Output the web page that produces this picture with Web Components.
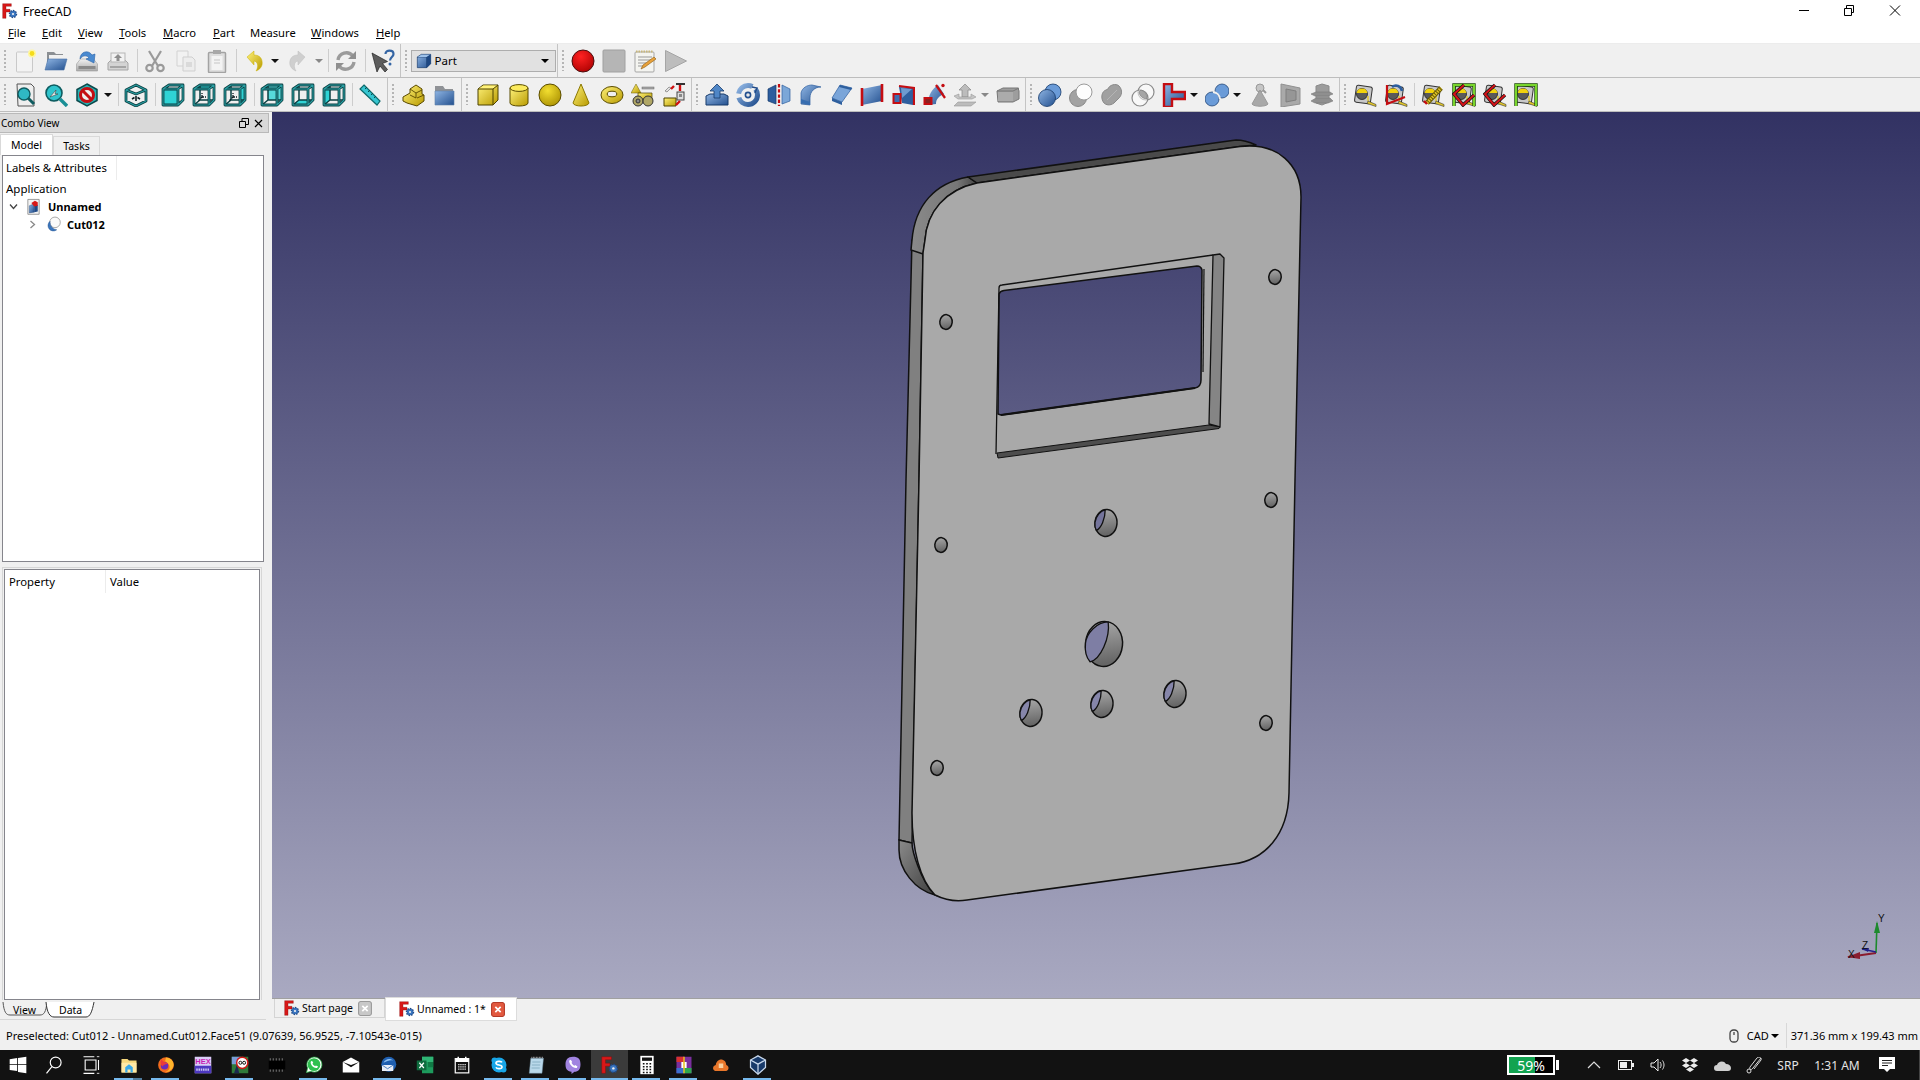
<!DOCTYPE html>
<html>
<head>
<meta charset="utf-8">
<title>FreeCAD</title>
<style>
  html, body { margin: 0; height: 100%; overflow: hidden; }
  body { width: 1920px; height: 1080px; display: flex; flex-direction: column; font: 11px "Noto Sans", sans-serif; color: #000; background: #f0f0f0; }
  fc-main { flex: 1; min-height: 0; }
</style>
</head>
<body>
  <fc-titlebar>FreeCAD</fc-titlebar>
  <fc-menubar></fc-menubar>
  <fc-toolbar row="1"></fc-toolbar>
  <fc-toolbar row="2"></fc-toolbar>
  <fc-main>
    <fc-combo></fc-combo>
    <fc-workspace></fc-workspace>
  </fc-main>
  <fc-statusbar></fc-statusbar>
  <fc-taskbar></fc-taskbar>

<script>
// --- Icons: every icon is a 24x24 svg body ---
const grad = (id, a, b, x2 = 1, y2 = 1) =>
  `<defs><linearGradient id="${id}" x1="0" y1="0" x2="${x2}" y2="${y2}"><stop offset="0" stop-color="${a}"/><stop offset="1" stop-color="${b}"/></linearGradient></defs>`;

const Y = grad('y', '#fff27a', '#b89a00');
const B = grad('b', '#8fb5e3', '#23508f');
const G = grad('g', '#f2f2f2', '#a8a8a8', 0, 1);
const TF = '#2fd3d5';

// view cubes have a dark outline with a lighter teal core
const tube = d => `<path d="${d}" fill="none" stroke="#0a3f42" stroke-width="2.8" stroke-linejoin="round"/><path d="${d}" fill="none" stroke="#2a9ea2" stroke-width="1.1" stroke-linejoin="round"/>`;
const cubeLines = tube('M2 6l6-4h14v15l-5 5H2zM2 6h15v16M17 6l5-4');
const backLines = `<path d="M8 2v15l-6 5M8 17h14" fill="none" stroke="#0a3f42" stroke-width="1.5"/>`;
const spokes = (x, y) => `<path d="M${x} ${y}l-4 4M${x} ${y}v-4M${x} ${y}h4" stroke="#0c1c20" stroke-width="1.3" stroke-dasharray="2 1"/>`;
const isoCube = `${tube('M12 2l10 5v11l-10 5-10-5V7zM2 7l10 4 10-4')}<path d="M12 13v5M8 16l2.500-1.500M16 16l-2.500-1.500" stroke="#0c1c20" stroke-width="1.6"/>`;
const measureBase = `<rect x="2.500" y="3" width="16" height="17" rx="2" transform="rotate(8 10 11)" fill="#c9c9c9" stroke="#333"/><circle cx="9" cy="11" r="5.500" fill="#5a5a5a" stroke="#222" stroke-width=".8"/><path d="M3.600 10a5.500 5.500 0 0 1 10.800 0z" fill="#f2d20c"/><path d="M15 13v5" stroke="#e3c82a" stroke-width="1.400"/><path d="M15 18l8 3.500v2l-9-3z" fill="#e3c82a" stroke="#333" stroke-width=".6"/>`;
const measureRed = `<path d="M12 2L2 11l9 11 11-10" fill="none" stroke="#111" stroke-width="3.400"/><path d="M12 2L2 11l9 11 11-10" fill="none" stroke="#d4141a" stroke-width="2"/>`;
const greenFrame = `<path d="M2 23V2h20v21" fill="none" stroke="#1d4a06" stroke-width="3.400"/><path d="M2 23V2h20v21" fill="none" stroke="#78d52c" stroke-width="2"/>`;

const ICONS = {
  new: `<rect x="3.500" y="3" width="16" height="20" rx="1" fill="#f3f3f3" stroke="#c9c9c9"/><circle cx="19" cy="4.500" r="4" fill="#fff6a0"/><circle cx="19" cy="4.500" r="2.400" fill="#f5dc1a"/>`,
  open: `${B}<path d="M3 3h7l2 2h7v8H3z" fill="#8b8f93"/><path d="M5 6h14v8H5z" fill="#f0f0f0"/><path d="M1 21l3-11h19l-3 11z" fill="url(#b)" stroke="#4a74a8" stroke-width=".6"/>`,
  save: `${G}<path d="M1.500 15l4-5h13l4 5v7h-21z" fill="url(#g)" stroke="#9a9a9a" stroke-width=".6"/><rect x="3.500" y="17" width="17" height="3" fill="#8a8a8a"/><path d="M5 10C5 3 13 0 17 6l3-1-1 9-8-4 3-1c-2-3-6-3-9 1z" fill="#4a8ad0" stroke="#2a62a6" stroke-width=".6"/>`,
  saveas: `<path d="M2 14l3-3h14l3 3v7H2z" fill="#d4d4d4" stroke="#a5a5a5"/><rect x="5" y="4" width="14" height="9" fill="#f2f2f2" stroke="#b5b5b5"/><path d="M12 5l4 4h-2.500v3h-3V9H8z" fill="#8e8e8e"/><rect x="4" y="17" width="16" height="2" fill="#a5a5a5"/>`,
  cut: `<g fill="none" stroke="#9a9a9a" stroke-width="2.200"><path d="M6 2l9 15M18 2L9 17"/><circle cx="6.500" cy="19" r="3.200"/><circle cx="17.500" cy="19" r="3.200"/></g>`,
  copy: `<path d="M3 2h11v15H3z" fill="#f2f2f2" stroke="#d2d2d2"/><path d="M9 8h9l3 3v11H9z" fill="#ededed" stroke="#cfcfcf"/><rect x="12" y="13" width="6" height="5" fill="#dadada"/>`,
  paste: `<rect x="3.500" y="3.500" width="17" height="20" rx="1" fill="#dedede" stroke="#a3a3a3" stroke-width="1.500"/><rect x="6.500" y="7" width="11" height="14" fill="#f3f3f3"/><rect x="8" y="1" width="8" height="4" fill="#a8a8a8"/><path d="M9 11h6M9 14h6" stroke="#c5c5c5"/>`,
  undo: `${Y}<path d="M5 8l7-6v4c6 0 9 4 8 10-1 3-3 5-6 6 2-3 3-9-2-10v4z" fill="url(#y)" stroke="#c9b000" stroke-width=".5"/>`,
  redo: `<path d="M19 8l-7-6v4C6 6 3 10 4 16c1 3 3 5 6 6-2-3-3-9 2-10v4z" fill="#cfcfcf" stroke="#bdbdbd" stroke-width=".5"/>`,
  refresh: `<g fill="none" stroke="#9b9b9b" stroke-width="3.400"><path d="M4 11C5 4 14 1 19 7"/><path d="M20 13c-1 7-10 10-15 4"/></g><path d="M22 2v8h-8zM2 22v-8h8z" fill="#8f8f8f"/>`,
  help: `<path d="M1 4l5 19 3-6 5 6 2.500-2.500-5-6 5-2z" fill="#5c5c5c" stroke="#222" stroke-width=".7"/><path d="M14.500 5c0-4.500 8-4.500 8 0 0 3-3.500 3-3.500 6.500" fill="none" stroke="#3465a4" stroke-width="2.200"/><circle cx="19" cy="15" r="1.500" fill="#3465a4"/>`,
  record: `<defs><radialGradient id="r" cx=".4" cy=".3" r=".8"><stop offset="0" stop-color="#f22"/><stop offset="1" stop-color="#a00"/></radialGradient></defs><circle cx="12" cy="12" r="11" fill="url(#r)" stroke="#4a1010"/>`,
  stop: `<rect x="1" y="1" width="22" height="22" rx="1" fill="#b5b5b5" stroke="#a0a0a0"/>`,
  macroedit: `<rect x="2" y="3" width="19" height="20" rx="1" fill="#f4f4f0" stroke="#a5a5a5"/><path d="M3 2.500h17" stroke="#c9b77a" stroke-width="2" stroke-dasharray="1.500 1"/><path d="M5 8h14M5 11h14M5 14h8M5 17h5" stroke="#999"/><path d="M8 20l2-4L21 8l2 2-11 8z" fill="#e8a13a" stroke="#8a5a10" stroke-width=".6"/>`,
  play: `<path d="M1.500 1.500l21 10.500-21 10.500z" fill="#bdbdbd" stroke="#a5a5a5"/>`,

  fitall: `<path d="M4 1h14l3 3v19H5z" fill="#eee" stroke="#555"/><circle cx="11" cy="11" r="6" fill="#2fb8c4" stroke="#0e5c60" stroke-width="1.400"/><path d="M15 15l6 6" stroke="#0e5c60" stroke-width="3"/>`,
  fitsel: `<circle cx="10" cy="10" r="8" fill="#2fc4cc" stroke="#0e5c60" stroke-width="1.600"/><path d="M6 14l6-7-1 4 3 0z" fill="#eee" stroke="#333" stroke-width=".5"/><path d="M16 16l7 7" stroke="#1a8f96" stroke-width="3.400"/>`,
  drawstyle: `<path d="M12 1l10 5.500v11L12 23 2 17.500v-11z" fill="#27b3b5" stroke="#0c4a4c" stroke-width="1.500"/><circle cx="12" cy="12" r="6.500" fill="#eee" stroke="#c40d12" stroke-width="3"/><path d="M7.500 7.500l9 9" stroke="#c40d12" stroke-width="3"/>`,
  iso: isoCube,
  front: `<path d="M2 6h15v16H2z" fill="${TF}"/>${cubeLines}`,
  top: `<path d="M2 6l6-4h14l-5 4z" fill="${TF}"/>${backLines}${cubeLines}${spokes(10, 14)}`,
  right: `<path d="M17 6l5-4v15l-5 5z" fill="${TF}"/>${backLines}${cubeLines}${spokes(10, 14)}`,
  rear: `<path d="M8 2h14v15H8z" fill="${TF}" opacity=".8"/>${backLines}${cubeLines}`,
  bottom: `<path d="M2 22l6-5h14l-5 5z" fill="${TF}"/>${backLines}${cubeLines}`,
  left: `<path d="M2 6l6-4v15l-6 5z" fill="${TF}"/>${backLines}${cubeLines}`,
  measure: `<path d="M7 2L23 18l-3 4L3 6z" fill="#36c5d0" stroke="#0e6a6c" stroke-width="1.200"/><path d="M8 6l2-2M11 9l2-2M14 12l2-2M17 15l2-2" stroke="#0e4a4c"/>`,
  part: `${Y}<path d="M2 14l7-4V6l6-4 6 4v5l2 1v6l-7 5-10-3-4-2z" fill="url(#y)" stroke="#5a4a00"/><path d="M9 6l6 4v5l-6-3M15 10l6-3M16 15l7-3" fill="none" stroke="#5a4a00" stroke-width=".9"/>`,
  group: `${B}<path d="M3 3h8l2 3h8v6H3z" fill="#8f9296"/><path d="M3 8h19v14H3z" fill="url(#b)" stroke="#5e7fa8" stroke-width=".6"/>`,
  box: `${Y}<path d="M2 6l5-4h15v15l-5 5H2z" fill="url(#y)" stroke="#4d4200"/><path d="M2.500 6l5-3.500h14L17 6z" fill="#fff27a"/><path d="M2 6h15v16M17 6l5-4" fill="none" stroke="#4d4200"/>`,
  cyl: `${Y}<path d="M3 5v15c0 4 18 4 18 0V5z" fill="url(#y)" stroke="#5a4c00"/><ellipse cx="12" cy="5" rx="9" ry="3.400" fill="#fbeb5e" stroke="#5a4c00"/>`,
  sphere: `<defs><radialGradient id="s" cx=".4" cy=".3" r=".8"><stop offset="0" stop-color="#f2de30"/><stop offset="1" stop-color="#a88e00"/></radialGradient></defs><circle cx="12" cy="12" r="11" fill="url(#s)" stroke="#5a4c00"/>`,
  cone: `${Y}<path d="M12 1L4 20c1 4 15 4 16 0z" fill="url(#y)" stroke="#8a7700"/>`,
  torus: `${Y}<ellipse cx="12" cy="12" rx="11" ry="8.500" fill="url(#y)" stroke="#5a4c00"/><ellipse cx="12" cy="11" rx="4.800" ry="2.800" fill="#efefef" stroke="#5a4c00"/>`,
  prims: `${Y}<path d="M5 1l5 9H0z" fill="url(#y)" stroke="#6b5b00" stroke-width=".5"/><rect x="11" y="4" width="12" height="2" fill="#aaa" stroke="#666" stroke-width=".5"/><path d="M7 10h14v7H7z" fill="url(#y)" stroke="#4d4200" stroke-width=".7"/><g fill="#b0a766" stroke="#333" stroke-width="1"><circle cx="7" cy="18" r="5"/><circle cx="17" cy="18" r="5"/></g><circle cx="7" cy="18" r="2" fill="#888" stroke="#333"/>`,
  builder: `${Y}<rect x="14" y="0" width="9" height="2" fill="#333"/><path d="M18 2v6" stroke="#d01010" stroke-width="2.400"/><rect x="15" y="9" width="7" height="8" fill="#ddd" stroke="#444"/><rect x="17" y="11" width="3" height="3" fill="#888"/><path d="M2 15h12v8H2z" fill="url(#y)" stroke="#4d4200"/><path d="M3 8l4-4 2 1-4 4z" fill="#e2e2e2" stroke="#666" stroke-width=".6"/><path d="M9 6l3-3M14 22l4-4" stroke="#d01010" stroke-width="2.400"/>`,
  extrude: `${B}<path d="M1 13l4-2h14l4 2v9H1z" fill="url(#b)" stroke="#163a6a"/><path d="M12 1l7 7h-4v7H9V8H5z" fill="#4f86c6" stroke="#163a6a" stroke-width=".8"/>`,
  revolve: `${B}<circle cx="12" cy="12" r="9.500" fill="none" stroke="url(#b)" stroke-width="5" stroke-dasharray="27 4 18 4"/><circle cx="12" cy="12" r="2.600" fill="#e8e8e8" stroke="#23508f" stroke-width="1.600"/><path d="M16 4l5 1-2 5" fill="none" stroke="#204a87" stroke-width="1.300"/>`,
  mirror: `${B}<path d="M1 6l8-4v19l-8-3z" fill="#2c5d9e" stroke="#163a6a" stroke-width=".7"/><path d="M15 2l8 4v12l-8 3z" fill="#7ba7d8" stroke="#2c5d9e" stroke-width=".7"/><path d="M12 1v22" stroke="#c40d12" stroke-width="2.200" stroke-dasharray="3.400 1.800"/>`,
  fillet: `${B}<path d="M3 21V10C4 5 9 2 14 2l9 2c-6 0-11 4-11 11v7z" fill="url(#b)" stroke="#2c5d9e" stroke-width=".7"/><path d="M3 16l9 3v3l-9-2z" fill="#376db0"/>`,
  chamfer: `${B}<path d="M3 15L11 2l12 3-10 14z" fill="#7aa5d9" stroke="#2c5d9e" stroke-width=".7"/><path d="M3 15l10 4v3L3 18zM11 2l12 3-1 2-12-3z" fill="#2e5f9e"/>`,
  ruled: `${B}<path d="M2 6l20-4v16L2 22z" fill="url(#b)"/><path d="M2 5v18M22 1v18" stroke="#c40d12" stroke-width="2.600"/>`,
  loft: `<path d="M8 4l14 1v17L11 20z" fill="#2f5f9f"/><path d="M10 5l11 1-10 9z" fill="#6e9bd0"/><path d="M8 3l15 2v17" fill="none" stroke="#c40d12" stroke-width="2.200"/><rect x="2.500" y="11" width="7" height="9" fill="#3d6db0" stroke="#c40d12" stroke-width="2"/>`,
  sweep: `${B}<path d="M6 22c0-10 4-16 10-20l6 9c-5 2-8 5-8 10z" fill="url(#b)"/><path d="M14 2l9 13" stroke="#c40d12" stroke-width="2.200"/><circle cx="21" cy="2.500" r="1.700" fill="#c40d12"/><rect x="2.500" y="15" width="7" height="6" fill="#8c2020" stroke="#c40d12" stroke-width="2"/>`,
  offset: `<path d="M12 1l6 6h-3v7H9V7H6z" fill="#bcbcbc" stroke="#888" stroke-width=".7"/><path d="M1 13l5-2v3h12v-3l5 3-4 2H5z" fill="#c5c5c5" stroke="#999" stroke-width=".6"/><path d="M1 23l4-4h18l-5 4z" fill="#bcbcbc" stroke="#999" stroke-width=".6"/>`,
  thick: `<path d="M1 8l6-3h15l1 3v8l-6 3H2z" fill="#9d9d9d" stroke="#777"/><path d="M1 8h16l6-3" fill="none" stroke="#777"/><path d="M2 9h15v9H2z" fill="#ababab"/>`,
  bool: `${B}<circle cx="15" cy="9" r="8" fill="#6a9bd8" stroke="#163a6a" stroke-width=".8"/><circle cx="9" cy="15" r="8.500" fill="url(#b)" stroke="#163a6a" stroke-width=".8"/>`,
  cutb: `<circle cx="9" cy="15" r="8.500" fill="#a2a2a2" stroke="#888"/><circle cx="15" cy="9" r="8" fill="#fdfdfd" stroke="#9a9a9a"/>`,
  fuse: `<path d="M4 20c-4-5-2-12 2-13l2-1c1-4 8-6 11-3 4 4 3 10-1 13l-4 4c-4 3-8 2-10 0z" fill="#a0a0a0" stroke="#8a8a8a"/><path d="M7 17L17 7" stroke="#b5b5b5"/>`,
  common: `<g fill="#fff" fill-opacity=".5" stroke="#8a8a8a" stroke-width="1.200"><circle cx="15" cy="9" r="8"/><circle cx="9" cy="15" r="8"/></g><path d="M10 7a8 8 0 0 1 6 9 8 8 0 0 1-8-7z" fill="#a5a5a5" stroke="#777" stroke-width=".6"/>`,
  join: `${B}<path d="M2 1h8v8h13v7H10v8H2z" fill="url(#b)" stroke="#c40d12" stroke-width="2.400"/>`,
  split: `${B}<circle cx="17" cy="8" r="7" fill="#6a9bd8" stroke="#163a6a" stroke-width=".7"/><circle cx="7" cy="16" r="7" fill="#6a9bd8" stroke="#163a6a" stroke-width=".7"/><path d="M8 9a8 8 0 0 1 7 7" fill="none" stroke="#f0f0f0" stroke-width="2"/>`,
  compound: `<circle cx="12" cy="5" r="4" fill="#c5c5c5" stroke="#999"/><path d="M12 7L4 21c2 3 14 3 16 0z" fill="#a8a8a8" stroke="#9a9a9a"/><path d="M15 7l3 3" stroke="#999" stroke-width="2"/>`,
  shapeinfo: `<path d="M2 1l19 4v16l-19 3z" fill="#a9a9a9" stroke="#919191"/><path d="M7 6l10 2v9l-10 2z" fill="#969696" stroke="#7f7f7f"/>`,
  compsolid: `<path d="M6 3l6-2 7 2v16l-7 3-6-2z" fill="#9c9c9c" stroke="#8a8a8a"/><path d="M1 11l5-2h14l3 2-5 2H5zM1 18l5-3h14l3 3-5 2H5z" fill="#8f8f8f" stroke="#7a7a7a" stroke-width=".6"/>`,
  mlin: measureBase,
  mang: `${measureBase}<path d="M3 2v19l18-7" fill="none" stroke="#c40d12" stroke-width="2.200"/><path d="M8 4c4-3 9-1 10 4" fill="none" stroke="#2c5d9e" stroke-width="2.600"/>`,
  mrefresh: `${measureBase}<path d="M6 20L20 5" stroke="#6a5a00" stroke-width="5"/><path d="M6 20L20 5" stroke="#e3c82a" stroke-width="3" stroke-dasharray="1.500 1"/><path d="M3 18l3 3" stroke="#c40d12" stroke-width="2.400"/>`,
  mtog1: `${measureBase}${greenFrame}${measureRed}`,
  mtog2: `${measureBase}${measureRed}`,
  mtog3: `${measureBase}${greenFrame}`,

  freecad: `<path d="M1 1h13v4H6v4.500h6v4H6V23H1z" fill="#d81818" stroke="#7a0a0a" stroke-width=".5"/><circle cx="16.500" cy="16.500" r="5" fill="#2d65ad" stroke="#204a87" stroke-width="2.600" stroke-dasharray="2.200 1.600"/><circle cx="16.500" cy="16.500" r="4.200" fill="#3b76c0"/><circle cx="16.500" cy="16.500" r="1.600" fill="#f0f0f0"/>`,
  doc: `${B}<path d="M4 2h16v21H4z" fill="#f4f4f4" stroke="#777"/><path d="M6 11l7-3v12l-7 1z" fill="url(#b)" stroke="#163a6a" stroke-width=".5"/><path d="M13 8l5 2v9l-5 1z" fill="#204a87"/><path d="M9 7l5-3 4 2v5l-5 1z" fill="#d81818"/>`,
  cut012: `<circle cx="15.500" cy="9" r="7.500" fill="#fafafa" stroke="#8a8a8a"/><path d="M8.500 7.500A7.500 7.500 0 1 0 18 19.500 11 11 0 0 1 8.500 7.500z" fill="#3a76bd" stroke="#204a87" stroke-width=".6"/>`,
  partcube: `${B}<path d="M2 6l6-4h14v14l-6 6H2z" fill="url(#b)" stroke="#163a6a"/><path d="M2 6h14v16" fill="none" stroke="#163a6a"/><path d="M2.500 6l6-3.500h13L16 6z" fill="#9ec2ea"/><path d="M16 6l6-4v14l-6 6z" fill="#1d4782"/>`,

  // taskbar
  start: `<path d="M2 5l9-1.300V11H2zM12 3.500L22 2v9H12zM2 12h9v7.300L2 18zM12 12h10v10l-10-1.500z" fill="#fff"/>`,
  search: `<circle cx="14" cy="9" r="6.500" fill="none" stroke="#fff" stroke-width="1.400"/><path d="M9.500 14L3 22" stroke="#fff" stroke-width="1.400"/>`,
  taskview: `<path d="M5 6h13v12H5z" fill="none" stroke="#fff" stroke-width="1.300"/><path d="M3 2h13M3 22h13M21 6v12" stroke="#fff" stroke-width="1.300"/><path d="M19 2h3M19 22h3" stroke="#fff"/>`,
  explorer: `<path d="M2 4h8l2 2h10v16H2z" fill="#f6d77c"/><path d="M2 9h20v13H2z" fill="#ffe9a6"/><path d="M7 15l5-4 5 4v7h-3v-4h-4v4H7z" fill="#39a8e8"/>`,
  firefox: `<circle cx="12" cy="12" r="10.500" fill="#f26b1d"/><path d="M12 2c6 0 11 5 10 11-1 5-6 9-11 8 5-1 7-5 5-9-1-3-5-3-5-6z" fill="#ffb52c"/><circle cx="10" cy="13" r="5" fill="#6a2cb8"/><path d="M6 4c2 5 7 4 9 7-2-1-6 0-8 3-3-3-3-7-1-10z" fill="#ea3a3a"/>`,
  hex: `<rect x="1" y="1" width="22" height="22" fill="#d9cdf6"/><text x="12" y="11" font-size="10" font-weight="700" text-anchor="middle" font-family="Liberation Sans" fill="#c81fb4">HEX</text><rect x="1" y="13" width="22" height="10" fill="#4d38c0"/><path d="M3 18h18" stroke="#c9c4f0" stroke-width="3" stroke-dasharray="2 1"/>`,
  arduino: `<rect x="1" y="1" width="22" height="22" fill="#2f7a3a"/><path d="M1 1h12v10H1z" fill="#7a9cd8"/><path d="M4 23l4-12 3 12z" fill="#1c2a50"/><circle cx="15" cy="9" r="7.500" fill="#fff" stroke="#d01818" stroke-width="2"/><circle cx="12.500" cy="9" r="2" fill="none" stroke="#000" stroke-width="1.200"/><circle cx="17.500" cy="9" r="2" fill="none" stroke="#000" stroke-width="1.200"/>`,
  chip: `<rect x="1" y="6" width="22" height="12" fill="#000"/><path d="M3 3v3M7 3v3M11 3v3M15 3v3M19 3v3M3 18v3M7 18v3M11 18v3M15 18v3M19 18v3" stroke="#888" stroke-width="1.200"/>`,
  whatsapp: `<path d="M2 22l1.600-6A10 10 0 1 1 8 20.400z" fill="#fff" stroke="#2fc04f" stroke-width="1"/><circle cx="12" cy="11.500" r="8.500" fill="#2fc04f"/><path d="M8 7c-2 3 3 10 8 9l1.500-2-3-1.500-1 1c-2-1-3-2-3.500-3.500l1-1L9.500 6.500z" fill="#fff"/>`,
  mail: `<path d="M1 8l11-6 11 6v14H1z" fill="#fff"/><path d="M1 8l11 7 11-7-11 4z" fill="#111"/>`,
  thunderbird: `<circle cx="13" cy="11" r="10" fill="#1f5fb0"/><path d="M4 12h15v8H4z" fill="#e8eef8"/><path d="M4 12l7.500 5L19 12" fill="none" stroke="#1f5fb0"/><path d="M6 9c3-6 9-6 13-3-5-1-8 1-13 3z" fill="#8fc1f0"/>`,
  excel: `<path d="M8 1h15v22H8z" fill="#1d9a5c"/><path d="M8 1h15v7H8z" fill="#2fb574"/><path d="M16 8h7v7h-7z" fill="#107a45"/><rect x="1" y="6" width="13" height="13" fill="#0e6c3e"/><path d="M4.500 9l6 7M10.500 9l-6 7" stroke="#fff" stroke-width="1.600"/>`,
  calendar: `<rect x="3" y="3.500" width="18" height="19" fill="#111" stroke="#fff" stroke-width="1.600"/><path d="M3 3h18v5H3z" fill="#fff"/><path d="M7 1v3M17 1v3" stroke="#fff" stroke-width="2"/><path d="M7 11.500h10M7 14.500h10M7 17.500h10" stroke="#fff" stroke-width="1.600" stroke-dasharray="1.600 1.200"/>`,
  skype: `<circle cx="12" cy="12" r="10" fill="#18a6e8"/><circle cx="6" cy="6" r="4" fill="#18a6e8"/><circle cx="18" cy="18" r="4" fill="#18a6e8"/><path d="M16 8.500c-1-2-8-2-8 1 0 3 8 2 8 5 0 3-7 3-8 .5" fill="none" stroke="#fff" stroke-width="2.200"/>`,
  notepad: `<path d="M5 3h17l-2 20H3z" fill="#b9d8ea" stroke="#6c8ea0" stroke-width=".6"/><path d="M6 2h15" stroke="#aaa" stroke-width="2" stroke-dasharray="1 1"/><path d="M7 8h11M6.500 12h11M6 16h11" stroke="#7aa3b8"/>`,
  viber: `<path d="M12 1c7 0 10 3 10 10s-3 10-8 10l-4 3v-3C4 20 2 17 2 11S5 1 12 1z" fill="#a184e0"/><path d="M7 6c-1 4 5 11 10 10l1-2-3-2-1 1c-2-1-3-2-4-4l1-1-2-3z" fill="#fff"/>`,
  calc: `<rect x="4" y="1" width="16" height="22" fill="#fff"/><rect x="6" y="3" width="12" height="4" fill="#111"/><path d="M7 10.500h10M7 14h10M7 17.500h10M7 21h10" stroke="#111" stroke-width="1.800" stroke-dasharray="2 2"/>`,
  winrar: `<rect x="2" y="1" width="20" height="22" fill="#7a2f9e"/><rect x="2" y="1" width="10" height="7" fill="#d83030"/><rect x="12" y="16" width="10" height="7" fill="#2fa84f"/><rect x="2" y="16" width="10" height="7" fill="#3a6fd0"/><rect x="8.500" y="8" width="7" height="8" fill="#fff"/><rect x="11" y="1" width="2" height="22" fill="#e8c020"/>`,
  cloudm: `<path d="M4 20C0 18 1 13 5 12c1-6 6-8 9-7 4 1 5 5 5 7 4 1 4 7 0 8z" fill="#e8762a"/><rect x="9" y="10" width="6" height="6" fill="#f8d0a0"/>`,
  vbox: `<path d="M12 1l9 5v9l-9 8-9-8V6z" fill="#183a6a" stroke="#c8d8ec" stroke-width="1.500"/><path d="M3 6l9 5 9-5M12 11v12" fill="none" stroke="#c8d8ec" stroke-width="1.500"/>`,
};

class FcIcon extends HTMLElement {
  connectedCallback() {
    const size = this.getAttribute('size') || 24;
    const name = this.getAttribute('name');
    this.attachShadow({ mode: 'open' }).innerHTML = `
      <style>:host { display: block; width: ${size}px; height: ${size}px; flex: none; } svg { display: block; }</style>
      <svg width="${size}" height="${size}" viewBox="0 0 24 24">${ICONS[name] || ''}</svg>`;
  }
}
customElements.define('fc-icon', FcIcon);

// --- Title bar ---
class FcTitlebar extends HTMLElement {
  constructor() {
    super();
    this.attachShadow({ mode: 'open' }).innerHTML = `
      <style>
        :host { display: flex; align-items: center; height: 22px; background: #fff; font-size: 12px; position: relative; }
        fc-icon { margin: 0 5px 0 2px; }
        .t { flex: 1; }
        .win { display: flex; align-self: flex-start; margin-right: 2px; }
        .win svg { display: block; width: 46px; height: 20px; }
      </style>
      <fc-icon name="freecad" size="16"></fc-icon>
      <span class="t"><slot></slot></span>
      <div class="win">
        <svg viewBox="0 0 46 20"><path d="M19 10.500h10" stroke="#000"/></svg>
        <svg viewBox="0 0 46 20"><path d="M18.500 8.500h7v7h-7zM20.500 8V5.500h7v7H26" fill="none" stroke="#000"/></svg>
        <svg viewBox="0 0 46 20"><path d="M18 5.500l10 10M28 5.500l-10 10" stroke="#000" fill="none"/></svg>
      </div>`;
  }
}
customElements.define('fc-titlebar', FcTitlebar);

// --- Menu bar ---
class FcMenubar extends HTMLElement {
  constructor() {
    super();
    const items = [['File', 8], ['Edit', 42], ['View', 78], ['Tools', 119], ['Macro', 163], ['Part', 213], ['Measure', 250], ['Windows', 311], ['Help', 376]];
    const html = items.map(([label, x], i) => {
      const next = items[i + 1] ? items[i + 1][1] : x + 40;
      const inner = label === 'Measure' ? label : `<u>${label[0]}</u>${label.slice(1)}`;
      return `<span style="width:${next - x}px">${inner}</span>`;
    }).join('');
    this.attachShadow({ mode: 'open' }).innerHTML = `
      <style>
        :host { display: flex; align-items: center; height: 21px; padding-left: 8px; background: #fff; border-bottom: 1px solid #ececec; font-size: 11.200px; }
        span { display: block; white-space: nowrap; }
        u { text-underline-offset: 1px; }
      </style>${html}`;
  }
}
customElements.define('fc-menubar', FcMenubar);

// --- Tool bars ---
// g = grip, s = separator, b = toolbar break, a = drop arrow, c = workbench combo; anything else is an icon
const ROWS = {
  1: [['g', 9.5], 'new', 'open', 'save', 'saveas', ['s', 6], 'cut', 'copy', 'paste', ['s', 6], 'undo', ['a', 13], 'redo', ['a', 12, 1], ['s', 5], 'refresh', ['s', 6], 'help', ['b', 2], ['g', 10], ['c', 145], ['b', 2], ['g', 9.5], 'record', 'stop', 'macroedit', 'play'],
  2: [['g', 9.5], 'fitall', 'fitsel', 'drawstyle', ['a', 12], ['s', 6], 'iso', ['s', 6], 'front', 'top', 'right', ['s', 6], 'rear', 'bottom', 'left', ['s', 4], 'measure', ['b', 3.5], ['g', 9.5], 'part', 'group', ['b', 2.5], ['g', 10.5], 'box', 'cyl', 'sphere', 'cone', 'torus', 'prims', 'builder', ['b', 2], ['g', 9.5], 'extrude', 'revolve', 'mirror', 'fillet', 'chamfer', 'ruled', 'loft', 'sweep', 'offset', ['a', 12, 1], 'thick', ['b', 3], ['g', 8], 'bool', 'cutb', 'fuse', 'common', 'join', ['a', 12], 'split', ['a', 12], 'compound', 'shapeinfo', 'compsolid', ['b', 3], ['g', 9], 'mlin', 'mang', ['s', 6], 'mrefresh', 'mtog1', 'mtog2', 'mtog3'],
};

class FcToolbar extends HTMLElement {
  connectedCallback() {
    const items = ROWS[this.getAttribute('row')].map(item => {
      if (typeof item === 'string') return `<div class="btn"><fc-icon name="${item}"></fc-icon></div>`;
      const [kind, w, dim] = item;
      if (kind === 'c') {
        return `<div class="combo" style="width:${w}px"><fc-icon name="partcube" size="16"></fc-icon><span>Part</span><i></i></div>`;
      }
      return `<div class="${kind}${dim ? ' dim' : ''}" style="width:${w}px"></div>`;
    }).join('');
    this.attachShadow({ mode: 'open' }).innerHTML = `
      <style>
        :host { display: flex; align-items: center; height: 33px; background: #f0f0f0; border-bottom: 1px solid #bdbdbd; font-size: 11.500px; }
        .btn { width: 31px; height: 33px; flex: none; display: flex; align-items: center; justify-content: center; }
        .g, .s, .b, .a { height: 33px; flex: none; position: relative; }
        .g::after { content: ""; position: absolute; left: 4px; top: 6px; bottom: 6px; width: 2px;
          background: repeating-linear-gradient(#b5b5b5 0 2px, transparent 2px 4px); }
        .s::after { content: ""; position: absolute; left: 50%; top: 5px; bottom: 5px; width: 1px; background: #cdcdcd; }
        .b::after { content: ""; position: absolute; right: 0; top: 0; bottom: 0; width: 1px; background: #c4c4c4; }
        .a::after { content: ""; position: absolute; left: 1px; top: 15px; border: 4px solid transparent; border-top: 4px solid #111; border-bottom: 0; }
        .dim::after { border-top-color: #888; }
        .combo { flex: none; box-sizing: border-box; height: 22px; display: flex; align-items: center; gap: 3px; padding: 0 6px 0 4px; background: #e1e1e1; border: 1px solid #adadad; }
        .combo span { flex: 1; }
        .combo i { border: 4px solid transparent; border-top: 4px solid #000; border-bottom: 0; }
      </style>${items}`;
  }
}
customElements.define('fc-toolbar', FcToolbar);

// --- Main area ---
class FcMain extends HTMLElement {
  constructor() {
    super();
    this.attachShadow({ mode: 'open' }).innerHTML = `
      <style>:host { display: flex; min-height: 0; }</style><slot></slot>`;
  }
}
customElements.define('fc-main', FcMain);

// --- Combo view dock on the left ---
class FcCombo extends HTMLElement {
  constructor() {
    super();
    this.attachShadow({ mode: 'open' }).innerHTML = `
      <style>
        :host { display: flex; flex-direction: column; width: 272px; flex: none; box-sizing: border-box; padding: 1px 3px 0 0; background: #f0f0f0; font-size: 11.300px; }
        .head { height: 18px; flex: none; display: flex; align-items: center; background: #d9d9d9; border: 1px solid #b9b9b9; border-left: 0; padding-left: 1px; font-size: 10px; }
        .head span { flex: 1; }
        .head svg { display: block; margin-right: 5px; }
        .tabs { display: flex; align-items: flex-end; height: 22px; flex: none; font-size: 10.500px; }
        .tab { box-sizing: border-box; display: flex; align-items: center; justify-content: center; border: 1px solid #d9d9d9; border-bottom: 0; }
        .tab.on { width: 53px; height: 21px; background: #fff; }
        .tab.off { width: 47px; height: 19px; background: #f0f0f0; }
        .pane { height: 407px; flex: none; margin-left: 2px; margin-right: 5px; box-sizing: border-box; border: 1px solid #85858c; background: #fff; display: flex; flex-direction: column; }
        .hdr { height: 24px; display: flex; align-items: center; flex: none; }
        .hdr span { width: 110px; padding-left: 3px; height: 24px; line-height: 24px; border-right: 1px solid #ececec; }
        .row { height: 18px; display: flex; align-items: center; flex: none; white-space: nowrap; }
        .app { padding-left: 3px; font-size: 11.500px; }
        .row b { font-weight: 700; font-size: 11px; }
        .chev { width: 9px; height: 9px; flex: none; }
        .props { flex: 1; min-height: 0; margin: 5px 7px 0 2px; padding: 1px 1px 0; border: 1px solid #d6d6d6; border-bottom: 0; display: flex; }
        .box { flex: 1; box-sizing: border-box; border: 1px solid #85858c; background: #fff; }
        .phead { display: flex; height: 23px; }
        .phead span { height: 23px; line-height: 23px; padding-left: 4px; }
        .phead span:first-child { width: 96px; border-right: 1px solid #ececec; padding-left: 4px; }
        .bottom { height: 19px; flex: none; display: flex; align-items: flex-start; margin-bottom: 1px; border-bottom: 1px solid #d6d6d6; margin-right: 3px; position: relative; font-size: 10.500px; }
        .bottom svg { display: block; margin: 2px 0 0 2px; }
        .bottom span { position: absolute; top: 3px; }
      </style>
      <div class="head">
        <span>Combo View</span>
        <svg width="10" height="10" viewBox="0 0 10 10"><path d="M.5 3.500h6v6h-6zM3 3V.5h6.500v6H7" fill="none" stroke="#000"/></svg>
        <svg width="9" height="9" viewBox="0 0 9 9"><path d="M1 1l7 7M8 1L1 8" stroke="#000" stroke-width="1.200"/></svg>
      </div>
      <div class="tabs">
        <div class="tab on">Model</div>
        <div class="tab off">Tasks</div>
      </div>
      <div class="pane">
        <div class="hdr"><span>Labels &amp; Attributes</span></div>
        <div class="row app" style="margin-top:-1px">Application</div>
        <div class="row">
          <svg class="chev" style="margin-left:6px" viewBox="0 0 9 9"><path d="M1 2.500l3.500 4 3.500-4" fill="none" stroke="#444" stroke-width="1.300"/></svg>
          <fc-icon name="doc" size="17" style="margin:0 6px 0 7px"></fc-icon><b>Unnamed</b>
        </div>
        <div class="row">
          <svg class="chev" style="margin-left:25px" viewBox="0 0 9 9"><path d="M2.500 1l4 3.500-4 3.500" fill="none" stroke="#888" stroke-width="1.300"/></svg>
          <fc-icon name="cut012" size="17" style="margin:0 6px 0 7px"></fc-icon><b>Cut012</b>
        </div>
      </div>
      <div class="props">
        <div class="box">
          <div class="phead"><span>Property</span><span>Value</span></div>
        </div>
      </div>
      <div class="bottom">
        <svg width="94" height="16" viewBox="0 0 94 16">
          <path d="M1 0c1 10 3 13 7 13h30c4 0 6-3 7-13" fill="none" stroke="#555"/>
          <path d="M44 0c1 11 4 15 8 15h32c4 0 6-5 8-15" fill="#fff" stroke="#333"/>
        </svg>
        <span style="left:13px">View</span><span style="left:59px;top:3px">Data</span>
      </div>`;
  }
}
customElements.define('fc-combo', FcCombo);

// --- Right side: 3D view and the document tabs ---
class FcWorkspace extends HTMLElement {
  constructor() {
    super();
    this.attachShadow({ mode: 'open' }).innerHTML = `
      <style>
        :host { display: flex; flex-direction: column; flex: 1; min-width: 0; }
        fc-viewport { flex: 1; min-height: 0; }
        fc-doctabs { flex: none; }
      </style>
      <fc-viewport></fc-viewport>
      <fc-doctabs></fc-doctabs>`;
  }
}
customElements.define('fc-workspace', FcWorkspace);

const LENS_MID = 'M-.2 -.97C-.6 -.87 -1 -.4 -1 .05C-1 .3 -.92 .5 -.8 .62C-.4 .42 -.1 -.3 -.2 -.97Z';
const LENS_BIG = 'M.1 -1C-.5 -.95 -1 -.4 -1 .05C-1 .45 -.85 .7 -.65 .85C-.1 .7 .3 -.3 .1 -1Z';
const hole = (cx, cy, rx, ry, see, d = LENS_MID) => {
  const lens = see ? `<path d="${d}" fill="${see}" stroke="#111" stroke-width="1.300" vector-effect="non-scaling-stroke"/>` : '';
  return `<g transform="translate(${cx} ${cy}) rotate(6) scale(${rx} ${ry})">
    <ellipse rx="1" ry="1" fill="url(#h)" stroke="#111" stroke-width="1.500" vector-effect="non-scaling-stroke"/>${lens}</g>`;
};

class FcViewport extends HTMLElement {
  constructor() {
    super();
    const face = 'M977 183L1240 146.500C1278 142 1301 165 1301 197L1295 480L1289 793C1288 835 1265 860 1233 864L967 900C955 902 945 900 935 895C920 880 912 850 912 813L919 480L923 253L925 240C927 212 945 190 977 183Z';
    const win = 'M999 294Q1000 291 1004 290.500L1197 266Q1201 266 1202 270L1201 380Q1201 387 1195 388L1001 415L998 414Z';
    this.attachShadow({ mode: 'open' }).innerHTML = `
      <style>
        :host { display: block; position: relative; background: linear-gradient(#323263, #a9a9c1); border-bottom: 1px solid #a0a0a0; overflow: hidden; }
        svg { position: absolute; left: 0; top: 0; display: block; }
        text { font: 10px "Liberation Sans", sans-serif; fill: #111; }
      </style>
      <svg width="1648" height="886" viewBox="272 112 1648 886">
        <defs>
          <linearGradient id="h" x1="0" y1="0" x2=".2" y2="1"><stop offset="0" stop-color="#acacac"/><stop offset="1" stop-color="#666"/></linearGradient>
          <linearGradient id="tl" x1="0" y1="0" x2="1" y2="0"><stop offset="0" stop-color="#8a8a8a"/><stop offset=".7" stop-color="#777"/><stop offset="1" stop-color="#444"/></linearGradient>
          <linearGradient id="bl" x1="0" y1="0" x2="1" y2="1"><stop offset="0" stop-color="#8a8a8a"/><stop offset="1" stop-color="#3f3f3f"/></linearGradient>
        </defs>
        <!-- side wall -->
        <path d="M912 240L906 480L899 840L912 843L919 480L923 254Z" fill="#808080" stroke="#111" stroke-width="1.500" stroke-linejoin="round"/>
        <path d="M912 240C915 205 935 183 968 177L977 183C945 190 927 212 925 240L923 254L911 250Z" fill="url(#tl)" stroke="#111" stroke-width="1.500"/>
        <path d="M968 177L1236 140Q1245 140 1256 145L1240 146.500L977 183Z" fill="#4a4a4a" stroke="#111" stroke-width="1.500" stroke-linejoin="round"/>
        <path d="M899 840L899 850C899 870 915 890 935 895C920 880 912 850 912 843Z" fill="url(#bl)" stroke="#111" stroke-width="1.500"/>
        <!-- front face with the window cut out -->
        <path d="${face} ${win}" fill="#a9a9a9" fill-rule="evenodd" stroke="#111" stroke-width="1.500" stroke-linejoin="round"/>
        <path d="M1213 255L1220 254L1224 258L1220 427L1209 424Z" fill="#858585" stroke="#111" stroke-width="1.300" stroke-linejoin="round"/>
        <path d="M997 453L1209 425L1220 427L1219 428.500L998 458Z" fill="#4d4d4d" stroke="#111" stroke-linejoin="round"/>
        <path d="M996 454L999 288Q999 285 1002 285L1213 255" fill="none" stroke="#111" stroke-width="1.300"/>
        <path d="M1204 269L1203 372" fill="none" stroke="#111" stroke-width="1.200"/>
        <path d="M1001 415L1195 388" fill="none" stroke="#111" stroke-width="2.200"/>
        ${hole(946, 322, 6.2, 7.4)}${hole(1275, 277, 6.2, 7.4)}
        ${hole(941, 545, 6.2, 7.4)}${hole(1271, 500, 6.2, 7.4)}
        ${hole(937, 768, 6.2, 7.4)}${hole(1266, 723, 6.2, 7.4)}
        ${hole(1106, 523, 11, 13.5, '#74749b')}
        ${hole(1031, 713, 11, 13.5, '#8686aa')}
        ${hole(1102, 704, 11, 13.5, '#8686aa')}
        ${hole(1175, 694, 11, 13.5, '#8686aa')}
        ${hole(1104, 644, 18.5, 22.5, '#7e7ea4', LENS_BIG)}
        <!-- axis cross -->
        <path d="M1876 953L1877 923" stroke="#1d8a2d" stroke-width="1.600"/><path d="M1877 921l-3 12h6z" fill="#1d8a2d"/>
        <path d="M1876 953L1848 957" stroke="#8a1c2e" stroke-width="1.800"/><path d="M1847 957l13-5 0 7z" fill="#8a1c2e"/>
        <path d="M1876 952L1862 949" stroke="#22228a" stroke-width="1.300"/><path d="M1861 948l8 0-1 4z" fill="#22228a"/>
        <text x="1878" y="922">Y</text><text x="1862" y="949">Z</text><text x="1848" y="958">X</text>
      </svg>`;
  }
}
customElements.define('fc-viewport', FcViewport);

class FcDoctabs extends HTMLElement {
  constructor() {
    super();
    this.attachShadow({ mode: 'open' }).innerHTML = `
      <style>
        :host { display: flex; align-items: flex-start; height: 22px; padding-left: 2px; background: #f0f0f0; font-size: 10.500px; position: relative; }
        .tab { box-sizing: border-box; display: flex; align-items: center; white-space: nowrap; }
        .off { width: 111px; height: 19px; padding-left: 9px; border: 1px solid #d4d4d4; border-top: 0; }
        .on { width: 132px; height: 24px; margin-top: -2px; padding-left: 13px; background: #fff; border: 1px solid #dcdcdc; z-index: 1; position: relative; }
        fc-icon { margin-right: 2px; }
        .x { box-sizing: border-box; width: 14px; height: 15px; margin-left: 5px; display: block; border-radius: 2px; }
      </style>
      <div class="tab off">
        <fc-icon name="freecad" size="16"></fc-icon>Start page
        <svg class="x" viewBox="0 0 13 14"><rect x=".5" y=".5" width="12" height="13" rx="2" fill="#c8c8c8" stroke="#9a9a9a"/><path d="M4 4.500l5 5M9 4.500l-5 5" stroke="#fff" stroke-width="1.600"/></svg>
      </div>
      <div class="tab on">
        <fc-icon name="freecad" size="16"></fc-icon>Unnamed : 1*
        <svg class="x" viewBox="0 0 13 14"><rect x=".5" y=".5" width="12" height="13" rx="2" fill="#e2593f" stroke="#b43a28"/><path d="M4 4.500l5 5M9 4.500l-5 5" stroke="#fff" stroke-width="1.600"/></svg>
      </div>`;
  }
}
customElements.define('fc-doctabs', FcDoctabs);

// --- Status bar ---
class FcStatusbar extends HTMLElement {
  constructor() {
    super();
    this.attachShadow({ mode: 'open' }).innerHTML = `
      <style>
        :host { display: flex; align-items: center; height: 29px; background: #f0f0f0; font-size: 11px; padding: 0 2px 0 6px; box-sizing: border-box; white-space: nowrap; }
        .msg { flex: 1; }
        svg { display: block; }
        .cad { display: flex; align-items: center; gap: 2px; padding-right: 7px; }
        .cad svg:first-child { margin-right: 6px; }
        .dim { height: 25px; line-height: 25px; padding-left: 4px; border-left: 1px solid #d8d8d8; }
      </style>
      <span class="msg">Preselected: Cut012 - Unnamed.Cut012.Face51 (9.07639, 56.9525, -7.10543e-015)</span>
      <div class="cad">
        <svg width="10" height="14" viewBox="0 0 10 14"><rect x="1" y="1" width="8" height="12" rx="3.500" fill="none" stroke="#444" stroke-width="1.300"/><path d="M5 3v3" stroke="#444" stroke-width="1.300"/></svg>
        <span>CAD</span>
        <svg width="8" height="4" viewBox="0 0 8 4"><path d="M0 0h8L4 4z" fill="#000"/></svg>
      </div>
      <span class="dim">371.36 mm x 199.43 mm</span>`;
  }
}
customElements.define('fc-statusbar', FcStatusbar);

// --- Windows task bar ---
class FcTaskbar extends HTMLElement {
  constructor() {
    super();
    const apps = [['explorer', 'run split'], ['firefox', 'run'], ['hex', ''], ['arduino', 'run'], ['chip', ''], ['whatsapp', 'run'], ['mail', ''], ['thunderbird', 'run'], ['excel', ''], ['calendar', ''], ['skype', 'run'], ['notepad', 'run'], ['viber', 'run'], ['freecad', 'run active'], ['calc', 'run'], ['winrar', 'run'], ['cloudm', ''], ['vbox', 'run']];
    const cell = ([name, cls]) => `<div class="cell ${cls}"><fc-icon name="${name}" size="${name === 'vbox' || name === 'calc' ? 20 : 18}"></fc-icon></div>`;
    this.attachShadow({ mode: 'open' }).innerHTML = `
      <style>
        :host { display: flex; align-items: stretch; height: 30px; background: #121212; color: #e4e4e4; font-size: 12px; }
        .cell { width: 37px; flex: none; display: flex; align-items: center; justify-content: center; position: relative; }
        .sys { width: 36px; }
        .run::after { content: ""; position: absolute; left: 4px; right: 5px; bottom: 0; height: 2px; background: #76b9ed; }
        .split::before { content: ""; position: absolute; right: 5px; bottom: 0; width: 9px; height: 2px; background: #4f7c9e; z-index: 1; }
        .active { background: #3b3b3b; }
        .active::after { left: 0; right: 0; }
        .apps { display: flex; margin-left: 1px; }
        .tray { display: flex; align-items: center; margin-left: auto; }
        .tray div { display: flex; align-items: center; justify-content: center; flex: none; }
        .tic { width: 32px; }
        .batt { box-sizing: border-box; width: 48px; height: 20px; margin-right: 23px; border: 2px solid #fff; background: linear-gradient(90deg, #12a350 0 58%, #000 58%); color: #fff; font-size: 14px; position: relative; }
        .batt::after { content: ""; position: absolute; right: -6px; top: 3px; width: 3px; height: 10px; background: #fff; }
        .last { width: 14px; height: 100%; box-sizing: border-box; border-right: 1px solid #444; }
      </style>
      <div class="cell sys"><fc-icon name="start" size="20"></fc-icon></div>
      <div class="cell sys"><fc-icon name="search" size="20"></fc-icon></div>
      <div class="cell"><fc-icon name="taskview" size="20"></fc-icon></div>
      <div class="apps">${apps.map(cell).join('')}</div>
      <div class="tray">
        <div class="batt">59%</div>
        <div class="tic"><svg width="14" height="8" viewBox="0 0 14 8"><path d="M1 7l6-6 6 6" fill="none" stroke="#ddd" stroke-width="1.200"/></svg></div>
        <div class="tic"><svg width="16" height="10" viewBox="0 0 16 10"><rect x=".5" y=".5" width="13" height="9" fill="none" stroke="#eee"/><rect x="2" y="2" width="7" height="6" fill="#eee"/><rect x="14" y="3" width="2" height="4" fill="#eee"/></svg></div>
        <div class="tic"><svg width="16" height="14" viewBox="0 0 16 14"><path d="M1 5h3l4-4v12L4 9H1z" fill="none" stroke="#eee"/><path d="M10 4c1.500 2 1.500 4 0 6M12.500 2.500c2 3 2 6 0 9" fill="none" stroke="#ddd"/></svg></div>
        <div class="tic"><svg width="16" height="14" viewBox="0 0 16 14"><path d="M4 0l4 2.500L4 5 0 2.500zM12 0l4 2.500L12 5 8 2.500zM4 5l4 2.500L4 10 0 7.500zM12 5l4 2.500L12 10 8 7.500zM8 9l4 2.500L8 14l-4-2.500z" fill="#eee"/></svg></div>
        <div class="tic"><svg width="17" height="11" viewBox="0 0 17 11"><path d="M3 11a3 3 0 0 1 0-6c1-4 7-5 9-1 3 0 5 2 5 4s-1 3-3 3z" fill="#cfcfcf"/></svg></div>
        <div class="tic"><svg width="17" height="17" viewBox="0 0 17 17"><path d="M14 1L6 11c-2 3-4 1-3-1l7-9c2-2 5 0 4 2l-7 9" fill="none" stroke="#ddd" transform="translate(1 0)"/><circle cx="3" cy="14" r="2" fill="none" stroke="#ddd"/></svg></div>
        <div style="width:36px">SRP</div>
        <div style="width:62px">1:31 AM</div>
        <div style="width:38px"><svg width="16" height="16" viewBox="0 0 16 16"><path d="M0 0h16v12h-5l-3 3-3-3H0z" fill="#fff"/><path d="M3 3.500h10M3 6h10M3 8.500h6" stroke="#222"/></svg></div>
        <div class="last"></div>
      </div>`;
  }
}
customElements.define('fc-taskbar', FcTaskbar);
</script>
</body>
</html>
